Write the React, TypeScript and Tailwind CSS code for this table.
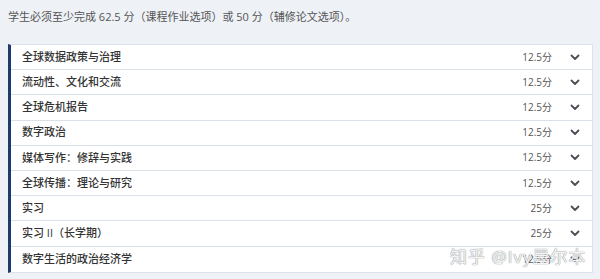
import React from 'react'

type Course = {
  name: string
  credits: string
}

const COURSES: Course[] = [
  { name: '全球数据政策与治理', credits: '12.5分' },
  { name: '流动性、文化和交流', credits: '12.5分' },
  { name: '全球危机报告', credits: '12.5分' },
  { name: '数字政治', credits: '12.5分' },
  { name: '媒体写作：修辞与实践', credits: '12.5分' },
  { name: '全球传播：理论与研究', credits: '12.5分' },
  { name: '实习', credits: '25分' },
  { name: '实习 II（长学期）', credits: '25分' },
  { name: '数字生活的政治经济学', credits: '12.5分' },
]

function Chevron() {
  return (
    <svg width="10" height="7" viewBox="0 0 10 7" fill="none" aria-hidden>
      <path d="M1.5 1.5 5 5l3.5-3.5" stroke="#4a4f57" strokeWidth="1.8" strokeLinecap="round" strokeLinejoin="round" />
    </svg>
  )
}

export default function App() {
  return (
    <div
      className="relative w-[600px] h-[279px] overflow-hidden bg-[#eef1f5] text-[#333]"
      style={{ fontFamily: '"Open Sans", "Noto Sans CJK SC", sans-serif' }}
    >
      <p className="h-[44px] pl-[8px] pt-[8px] text-[11px] leading-[18px] text-[#555]">
        学生必须至少完成 62.5 分（课程作业选项）或 50 分（辅修论文选项）。
      </p>

      <div className="ml-[8px] w-[585px] border-l-[3px] border-y border-r border-y-[#dde3ea] border-r-[#dde3ea] border-l-[#1f3b6e] bg-white">
        {COURSES.map((c, i) => (
          <div
            key={i}
            className="flex h-[25.2px] items-center border-b border-[#d9e0e8] pl-[11px] pr-[11px] last:border-b-0"
          >
            <span className="flex-1 text-[11px] font-medium text-[#333]">{c.name}</span>
            <span className="text-[10px] text-[#555]">{c.credits}</span>
            <span className="ml-[17px] flex w-[12px] justify-center">
              <Chevron />
            </span>
          </div>
        ))}
      </div>

      <div
        className="pointer-events-none absolute left-[450px] top-[244px] text-[17px] tracking-[1px] text-white/90"
        style={{ textShadow: '0 0 1px #8a8f96, 0 0 1px #8a8f96' }}
      >
        知乎 @Ivy墨尔本
      </div>
    </div>
  )
}
